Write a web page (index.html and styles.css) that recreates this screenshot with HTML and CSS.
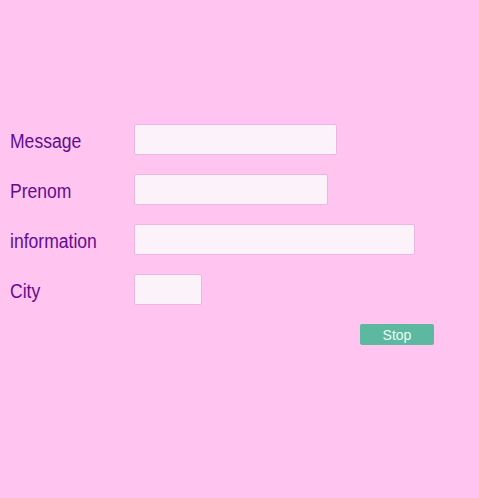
FILE: index.html
```html
<!DOCTYPE html>
<html>
<head>
<meta charset="utf-8">
<link rel="stylesheet" href="styles.css">
</head>
<body>
<form class="form">
  <label class="label"><span class="label-text">Message</span></label>
  <input class="field field-message" type="text">
  <label class="label"><span class="label-text">Prenom</span></label>
  <input class="field field-prenom" type="text">
  <label class="label"><span class="label-text">information</span></label>
  <input class="field field-info" type="text">
  <label class="label"><span class="label-text">City</span></label>
  <input class="field field-city" type="text">
  <span></span>
  <button class="stop" type="button">Stop</button>
</form>
</body>
</html>
```
FILE: styles.css
```css
html, body {
  margin: 0;
  padding: 0;
  background: #ffc4ef;
  height: 100%;
}
body {
  font-family: "Liberation Sans", Arial, sans-serif;
}
.form {
  display: grid;
  grid-template-columns: 124px 1fr;
  row-gap: 19px;
  padding: 124px 0 0 10px;
  align-items: center;
}
.label {
  color: #620c92;
  font-size: 19.5px;
  line-height: 31px;
  height: 31px;
  padding-top: 2px;
  box-sizing: border-box;
}
.label-text {
  display: inline-block;
  transform: scaleX(0.9);
  transform-origin: left center;
}
.field {
  box-sizing: border-box;
  height: 31px;
  margin: 0;
  background: #fcf2fa;
  border: 1px solid #ebb6df;
  border-radius: 2px;
  padding: 0 4px;
  outline: none;
}
.field-message { width: 203px; }
.field-prenom { width: 194px; }
.field-info { width: 281px; }
.field-city { width: 68px; }
.stop {
  justify-self: start;
  margin-left: 226px;
  width: 74px;
  height: 21px;
  border: none;
  border-radius: 2px;
  background: #5cb89f;
  color: #eafff4;
  font-family: "Liberation Sans", Arial, sans-serif;
  font-size: 14px;
  padding: 0;
}
```
